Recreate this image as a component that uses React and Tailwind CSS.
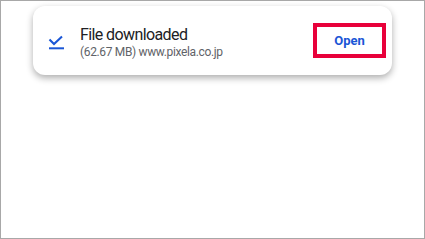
export default function App() {
  return (
    <div
      className="w-[425px] h-[239px] bg-white border border-[#a8a8a8] overflow-hidden pt-[5px] pl-[32px]"
      style={{ fontFamily: "Roboto, 'Noto Sans', sans-serif" }}
    >
      <div className="w-[359px] h-[69px] bg-white rounded-[12px] shadow-[0_3px_7px_rgba(0,0,0,0.32)] flex items-center">
        <div className="w-[46px] h-full flex items-start pl-[15px] pt-[28px] shrink-0">
          <svg width="17" height="17" viewBox="0 0 17 17">
            <path d="M1.5 5.5 L6 10 L14 2.5" fill="none" stroke="#1a56d6" strokeWidth="2.1" />
            <rect x="1" y="13.3" width="15" height="2" fill="#1a56d6" />
          </svg>
        </div>
        <div className="flex-1 h-full flex flex-col pt-[20px] pl-[1px]">
          <div className="text-[16px] leading-[18px] tracking-[-0.6px] text-[#202124]">File downloaded</div>
          <div className="text-[12px] leading-[14px] tracking-[-0.35px] text-[#5f6368] mt-[1px]">
            (62.67 MB) www.pixela.co.jp
          </div>
        </div>
        <div className="mr-[6px] w-[73px] h-[35px] border-[4px] border-[#e8003a] flex items-center justify-center shrink-0">
          <span className="text-[13px] font-bold text-[#1a56d6] pt-[1px]">Open</span>
        </div>
      </div>
    </div>
  );
}
